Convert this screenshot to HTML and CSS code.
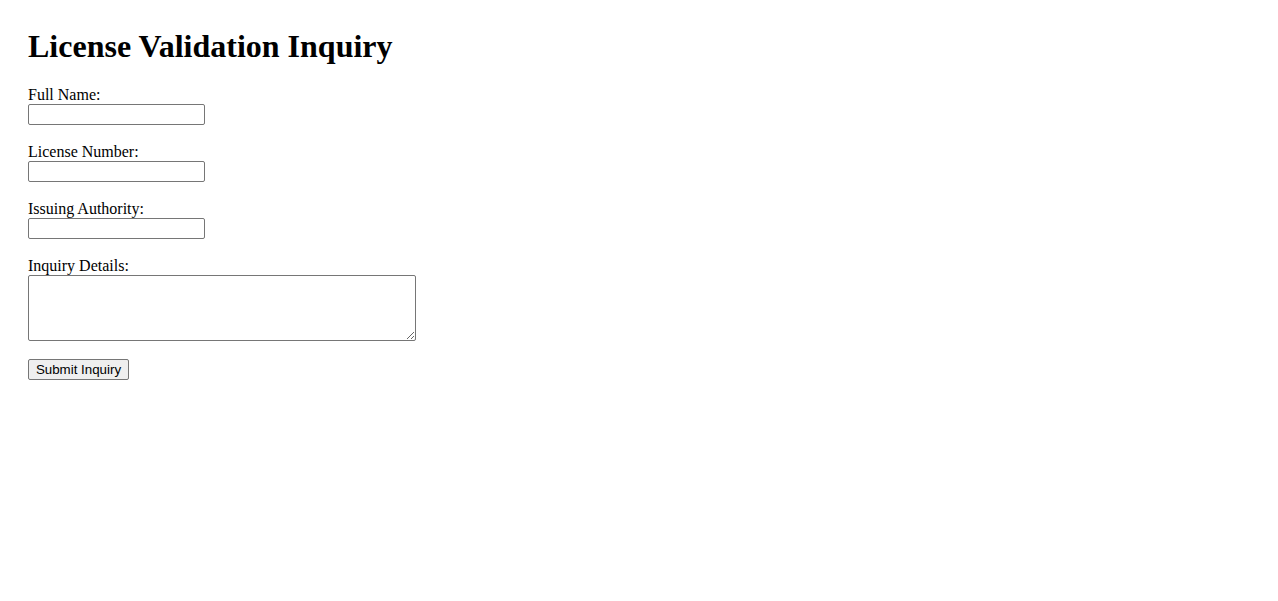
FILE: index.html
```html
<!DOCTYPE html>
<html lang="en">
<head>
<meta charset="utf-8">
<title>License Validation Inquiry</title>
<link rel="stylesheet" href="styles.css">
</head>
<body>
<div class="page">
<h1 class="title">License Validation Inquiry</h1>
<form class="inquiry-form">
<label class="field-label" for="fullName">Full Name:</label><br>
<input class="text-input" type="text" id="fullName" name="fullName"><br><br>
<label class="field-label" for="licenseNumber">License Number:</label><br>
<input class="text-input" type="text" id="licenseNumber" name="licenseNumber"><br><br>
<label class="field-label" for="authority">Issuing Authority:</label><br>
<input class="text-input" type="text" id="authority" name="authority"><br><br>
<label class="field-label" for="details">Inquiry Details:</label><br>
<textarea class="text-area" id="details" name="details" rows="4" cols="50"></textarea><br><br>
<input class="submit-btn" type="submit" value="Submit Inquiry">
</form>
</div>
</body>
</html>
```
FILE: styles.css
```css
html, body {
  margin: 0;
  padding: 0;
  background: #ffffff;
}
body {
  font-family: "Liberation Serif", "Times New Roman", serif;
  font-size: 16px;
  color: #000000;
}
.page {
  padding: 28px;
}
.title {
  margin: 0 0 21px;
  font-size: 32px;
  font-weight: bold;
  line-height: 37px;
}
.inquiry-form {
  margin: 0;
}
.field-label {
  font-size: 16px;
}
.text-input {
  box-sizing: border-box;
  width: 177px;
  height: 21px;
  margin: 0;
  padding: 1px 2px;
  border: 1px solid #767676;
  border-radius: 2px;
  font-family: "Liberation Sans", Arial, sans-serif;
  font-size: 13.33px;
  background: #ffffff;
}
.text-area {
  box-sizing: border-box;
  width: 388px;
  height: 66px;
  margin: 0;
  padding: 2px;
  border: 1px solid #767676;
  border-radius: 2px;
  font-family: "Liberation Mono", monospace;
  font-size: 13.33px;
  vertical-align: bottom;
}
.submit-btn {
  box-sizing: border-box;
  width: 101px;
  height: 21px;
  margin: 0;
  padding: 1px 6px;
  border: 1px solid #767676;
  border-radius: 2px;
  background: #efefef;
  color: #000000;
  font-family: "Liberation Sans", Arial, sans-serif;
  font-size: 13.33px;
}
```
